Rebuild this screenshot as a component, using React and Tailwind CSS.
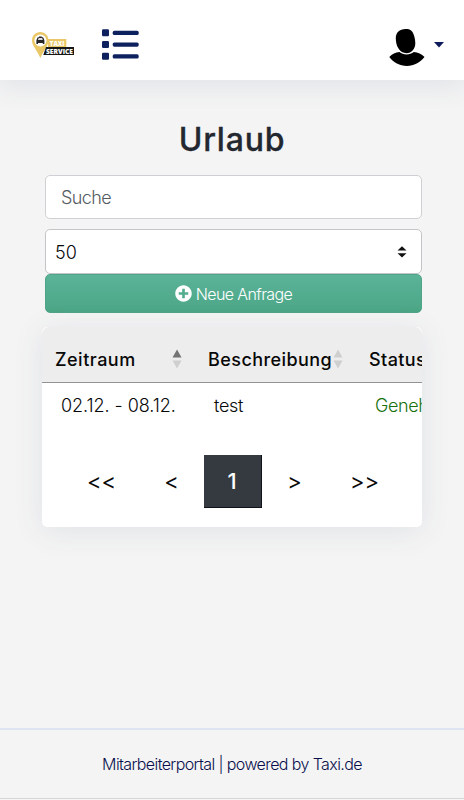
import React from 'react';
import { FaPlusCircle } from 'react-icons/fa';

function Logo() {
  return (
    <svg width="44" height="28" viewBox="0 0 44 28" className="block">
      <path d="M8.300 0C3.500 0 0 3.600 0 8.300C0 14 4.500 17 8.300 26C12.500 17 16.500 14 16.500 8.300C16.500 3.600 13 0 8.300 0Z" fill="#eac868" />
      <rect x="16" y="7" width="18.300" height="8" fill="#eac868" />
      <circle cx="8.400" cy="8.500" r="6" fill="#fff" />
      <path d="M4.400 8.300L5.700 5.300H7V4.400H9.800V5.300H11.100L12.400 8.300V12H10.800V11.100H6V12H4.400Z" fill="#252525" />
      <path d="M5.900 7.900L6.700 6H10.100L10.900 7.900Z" fill="#ddd" />
      <path d="M14 15H42V23H11.300Z" fill="#171717" />
      <text x="17.800" y="13.600" textLength="14.500" lengthAdjust="spacingAndGlyphs" fontSize="7" fontWeight="800" fill="#fff" fontFamily="Open Sans, sans-serif">TAXI</text>
      <text x="14" y="21.600" textLength="27" lengthAdjust="spacingAndGlyphs" fontSize="7.300" fontWeight="800" fill="#fff" fontFamily="Open Sans, sans-serif">SERVICE</text>
    </svg>
  );
}

function MenuIcon() {
  return (
    <svg width="38" height="32" viewBox="0 0 38 32" fill="#0d215f" className="block">
      {[0.3, 12, 23.8].map((y) => (
        <g key={y}>
          <rect x="0" y={y} width="7" height="7" rx="1.200" />
          <rect x="10.700" y={y + 1.500} width="26" height="4.200" rx="1.600" />
        </g>
      ))}
    </svg>
  );
}

function UserIcon() {
  return (
    <svg width="36" height="38" viewBox="0 0 36 38" className="block">
      <path d="M16.500 0C10.500 0 6.800 3.500 6.800 9.500C6.900 13 7.500 16.500 9.500 19.500C11.300 22.400 14 24.200 17.500 24.200C22.500 24.200 26.500 20 26.300 14C26.200 10 25.300 6 23.500 3C21.800 .5 19.500 0 16.500 0Z" />
      <path d="M0.300 28C3 25 6.500 23.300 10.500 22.900C14 26.200 21 26.200 24.800 22.900C28.900 23.300 32.700 25 35.500 28C31 33.500 25 37 18 37C10.500 37 4.500 33.500 0.300 28Z" />
    </svg>
  );
}

function Sort({ up }) {
  return (
    <svg width="10" height="20" viewBox="0 0 10 20" className="block shrink-0">
      <path d="M0.500 8.500L5 0.500L9.500 8.500Z" fill={up} />
      <path d="M0.500 11.500H9.500L5 19.500Z" fill="#cfcfcf" />
    </svg>
  );
}

export default function App() {
  return (
    <div className="flex h-[800px] w-[464px] flex-col overflow-hidden bg-[#f4f4f4] font-['Inter',sans-serif] text-[#080808]">
      <header className="flex h-20 shrink-0 items-start bg-white pl-8 pr-5 shadow-[0_8px_24px_rgba(60,80,120,0.09)]">
        <div className="mt-8"><Logo /></div>
        <div className="ml-[26px] mt-[29px]"><MenuIcon /></div>
        <div className="ml-auto mt-[29px]"><UserIcon /></div>
        <svg width="10" height="6" className="ml-[9px] mt-[42px]"><path d="M0 0H10L5 5.500Z" fill="#0d1a5c" /></svg>
      </header>
      <main className="flex flex-1 flex-col pl-[45px] pr-[42px] pt-[41px]">
        <h1 className="mr-[3px] text-center text-[32px] font-medium leading-[38px] tracking-[0.8px] text-[#23272f] [-webkit-text-stroke:0.3px_#23272f]">Urlaub</h1>
        <div className="mt-[16px] flex h-[44px] items-center rounded-[5px] border border-[#cfd0d3] bg-white px-[15px] text-[18px] font-light tracking-[-0.6px] text-[#555b61]">Suche</div>
        <div className="mt-[10px] flex h-[45px] items-center justify-between rounded-[5px] border border-[#c4c5c8] bg-white pl-[9px] pr-[14px] pt-px text-[18px] font-light">
          <span>50</span>
          <svg width="10" height="12"><path d="M0.500 4.500L5 0.300L9.500 4.500ZM0.500 7.200H9.500L5 11.500Z" fill="#111" /></svg>
        </div>
        <button className="flex h-[39px] items-center justify-center gap-1 rounded-[5px] border border-[#50a488] bg-linear-to-b from-[#5bb398] to-[#4ba686] text-[16px] font-light tracking-[-0.6px] text-white">
          <FaPlusCircle size={17} className="-mt-px" />
          <span>Neue Anfrage</span>
        </button>
        <section className="-ml-[3px] mt-[14px] h-[200px] overflow-hidden rounded-[5px] bg-white shadow-[0_4px_30px_rgba(60,80,120,0.1)]">
          <div className="flex h-[56px] items-center rounded-t-[7px] border-b border-[#929292] bg-[#ededed] pt-[9px] text-[18px] font-medium">
            <div className="flex w-[153px] shrink-0 items-center justify-between pl-[13px] pr-[13px]"><span className="tracking-[0.5px]">Zeitraum</span><Sort up="#747474" /></div>
            <div className="flex w-[161px] shrink-0 items-center justify-between pl-[13px] pr-[13px]"><span className="tracking-[0.43px]">Beschreibung</span><Sort up="#cfcfcf" /></div>
            <div className="shrink-0 pl-[13px] tracking-[0.4px]">Status</div>
          </div>
          <div className="flex h-[45px] items-center text-[18px] font-light">
            <div className="w-[153px] shrink-0 whitespace-nowrap pl-[19px] tracking-[-0.05px]">02.12. - 08.12.</div>
            <div className="w-[161px] shrink-0 pl-[19px] tracking-[-0.3px]">test</div>
            <div className="shrink-0 pl-[19px] tracking-[-0.4px] text-[#17720e]">Genehmigt</div>
          </div>
          <nav className="mt-[27px] flex h-[53px] items-center pl-[33px] text-[22px]">
            <span className="w-[53px] text-center">&lt;&lt;</span>
            <span className="ml-[17px] w-[53px] text-center">&lt;</span>
            <span className="ml-[6px] flex h-[53px] w-[58px] items-center justify-center border-b border-r border-[#0f1218] bg-[#353a41] pr-px font-medium text-white">1</span>
            <span className="ml-[6px] w-[53px] text-center">&gt;</span>
            <span className="ml-[17px] w-[53px] text-center">&gt;&gt;</span>
          </nav>
        </section>
      </main>
      <footer className="flex h-[70px] shrink-0 items-center justify-center border-t-2 border-[#dfe5f0] text-[16px] font-light tracking-[-0.6px] text-[#080f4c]">Mitarbeiterportal | powered by Taxi.de</footer>
      <div className="h-[2px] shrink-0 border-t border-[#d6d6d6]" />
    </div>
  );
}
